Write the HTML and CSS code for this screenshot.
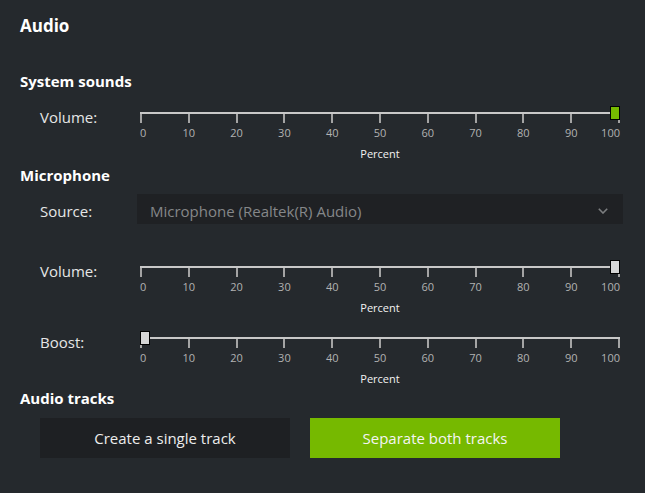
FILE: index.html
```html
<!DOCTYPE html>
<html>
<head>
<meta charset="utf-8">
<link rel="stylesheet" href="styles.css">
</head>
<body>
<div class="panel">
  <h1 class="title">Audio</h1>

  <h2 class="section sec-system">System sounds</h2>
  <div class="row slider-row row-sys">
    <div class="label">Volume:</div>
    <div class="slider">
      <div class="track">
        <div class="rail"></div>
        <div class="ticks"><i></i><i></i><i></i><i></i><i></i><i></i><i></i><i></i><i></i><i></i><i></i></div>
        <div class="thumb thumb-green" style="left: calc(100% - 10px)"></div>
      </div>
      <div class="scale"><span>0</span><span>10</span><span>20</span><span>30</span><span>40</span><span>50</span><span>60</span><span>70</span><span>80</span><span>90</span><span>100</span></div>
      <div class="unit">Percent</div>
    </div>
  </div>

  <h2 class="section sec-mic">Microphone</h2>
  <div class="row source-row">
    <div class="label label-source">Source:</div>
    <div class="dropdown">
      <span class="dropdown-text">Microphone (Realtek(R) Audio)</span>
      <svg class="chevron" width="10" height="6" viewBox="0 0 10 6"><polyline points="0.8,0.8 5,5 9.2,0.8" fill="none" stroke="#7c7e80" stroke-width="1.6"/></svg>
    </div>
  </div>

  <div class="row slider-row row-micvol">
    <div class="label">Volume:</div>
    <div class="slider">
      <div class="track">
        <div class="rail"></div>
        <div class="ticks"><i></i><i></i><i></i><i></i><i></i><i></i><i></i><i></i><i></i><i></i><i></i></div>
        <div class="thumb thumb-gray" style="left: calc(100% - 10px)"></div>
      </div>
      <div class="scale"><span>0</span><span>10</span><span>20</span><span>30</span><span>40</span><span>50</span><span>60</span><span>70</span><span>80</span><span>90</span><span>100</span></div>
      <div class="unit">Percent</div>
    </div>
  </div>

  <div class="row slider-row row-boost">
    <div class="label">Boost:</div>
    <div class="slider">
      <div class="track">
        <div class="rail"></div>
        <div class="ticks"><i></i><i></i><i></i><i></i><i></i><i></i><i></i><i></i><i></i><i></i><i></i></div>
        <div class="thumb thumb-gray" style="left: 0"></div>
      </div>
      <div class="scale"><span>0</span><span>10</span><span>20</span><span>30</span><span>40</span><span>50</span><span>60</span><span>70</span><span>80</span><span>90</span><span>100</span></div>
      <div class="unit">Percent</div>
    </div>
  </div>

  <h2 class="section sec-tracks">Audio tracks</h2>
  <div class="buttons">
    <button class="btn btn-dark">Create a single track</button>
    <button class="btn btn-green">Separate both tracks</button>
  </div>
</div>
</body>
</html>
```

FILE: styles.css
```css
html, body {
  margin: 0;
  padding: 0;
  background: #25292d;
}

body {
  font-family: "Open Sans", "Noto Sans", sans-serif;
  color: #e6e6e6;
  width: 645px;
  height: 493px;
  overflow: hidden;
}

.panel {
  padding: 14px 20px 0 20px;
}

.title {
  margin: 0;
  font-size: 17px;
  font-weight: 700;
  line-height: 24px;
  color: #ffffff;
}

.section {
  margin: 0;
  font-size: 15px;
  font-weight: 700;
  line-height: 20px;
  color: #ffffff;
}

.sec-system { margin-top: 33px; }
.sec-mic { margin-top: 4px; }
.sec-tracks { margin-top: 2px; }

.row {
  display: flex;
  padding-left: 20px;
}

.slider-row {
  align-items: flex-start;
}

.row-sys { margin-top: 15px; }
.row-micvol { margin-top: 36px; }
.row-boost { margin-top: 16px; }

.label {
  width: 100px;
  flex: none;
  font-size: 15px;
  line-height: 20px;
  color: #e6e6e6;
}

.slider-row .label {
  margin-top: 1px;
}

/* slider */
.slider {
  width: 480px;
  flex: none;
}

.track {
  position: relative;
  padding-top: 6px;
}

.rail {
  height: 2px;
  background: #c8c8c8;
}

.ticks {
  display: flex;
  justify-content: space-between;
  height: 9px;
}

.ticks i {
  display: block;
  width: 2px;
  height: 9px;
  background: #a4a4a4;
}

.thumb {
  position: absolute;
  top: 0;
  width: 10px;
  height: 14px;
  box-sizing: border-box;
  border: 1px solid #000;
}

.thumb-green { background: #76b900; }
.thumb-gray { background: #d4d4d4; }

.scale {
  display: flex;
  justify-content: space-between;
  margin-top: 2px;
  height: 15px;
  font-size: 11px;
  line-height: 15px;
  color: #b2b2b2;
}

.scale span {
  width: 2px;
  display: flex;
  justify-content: center;
  white-space: nowrap;
}

.scale span:first-child { justify-content: flex-start; }
.scale span:last-child { justify-content: flex-end; }

.unit {
  margin-top: 6px;
  font-size: 11px;
  line-height: 15px;
  text-align: center;
  color: #f2f2f2;
}

/* dropdown */
.source-row {
  margin-top: 9px;
  align-items: baseline;
}

.label-source {
  width: 97px;
}

.dropdown {
  width: 486px;
  height: 30px;
  box-sizing: border-box;
  padding: 7px 15px 0 13px;
  background: #1f2124;
  display: flex;
  align-items: baseline;
  justify-content: space-between;
  font-size: 15px;
  line-height: 20px;
}

.dropdown-text {
  color: #858789;
}

.chevron {
  align-self: center;
  margin-top: -3px;
}

/* buttons */
.buttons {
  display: flex;
  gap: 20px;
  margin-top: 10px;
  padding-left: 20px;
}

.btn {
  width: 250px;
  height: 40px;
  border: none;
  padding: 0;
  font-family: "Open Sans", "Noto Sans", sans-serif;
  font-size: 15px;
  line-height: 20px;
  color: #ededed;
  cursor: pointer;
}

.btn-dark { background: #1e2023; }
.btn-green { background: #76b900; color: #f4f4f4; }
```
